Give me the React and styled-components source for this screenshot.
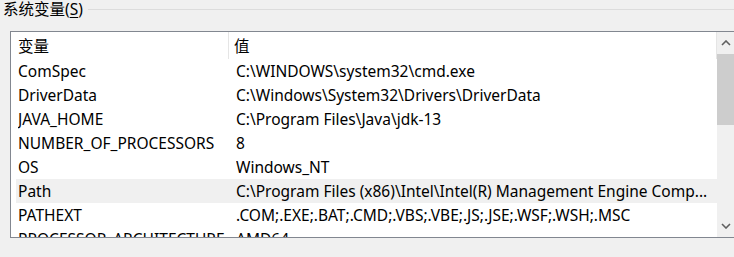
import styled, { createGlobalStyle } from 'styled-components';

const GlobalStyle = createGlobalStyle`
  html, body {
    margin: 0;
    padding: 0;
    background: #f0f0f0;
    overflow: hidden;
  }
  body {
    font-family: 'Noto Sans', 'Noto Sans CJK SC', sans-serif;
    font-size: 15.5px;
    color: #000;
  }
`;

const vars = [
  ['ComSpec', 'C:\\WINDOWS\\system32\\cmd.exe'],
  ['DriverData', 'C:\\Windows\\System32\\Drivers\\DriverData'],
  ['JAVA_HOME', 'C:\\Program Files\\Java\\jdk-13'],
  ['NUMBER_OF_PROCESSORS', '8'],
  ['OS', 'Windows_NT'],
  ['Path', 'C:\\Program Files (x86)\\Intel\\Intel(R) Management Engine Comp...'],
  ['PATHEXT', '.COM;.EXE;.BAT;.CMD;.VBS;.VBE;.JS;.JSE;.WSF;.WSH;.MSC'],
  ['PROCESSOR_ARCHITECTURE', 'AMD64'],
];

const Chevron = ({ down }) => (
  <svg width="10" height="6" viewBox="0 0 10 6">
    <path
      d={down ? 'M1 1 L5 5 L9 1' : 'M1 5 L5 1 L9 5'}
      fill="none"
      stroke="#606060"
      strokeWidth="1.6"
    />
  </svg>
);

const App = () => {
  return (
    <>
      <GlobalStyle />
      <Page>
        <GroupHead>
          <GroupLabel>
            系统变量(<u>S</u>)
          </GroupLabel>
          <GroupLine />
        </GroupHead>
        <ListBox>
          <ListArea>
            <Header>
              <HeadCell>变量</HeadCell>
              <HeadCell $value>值</HeadCell>
            </Header>
            {vars.map(([name, value]) => (
              <Row key={name} $selected={name === 'Path'}>
                <Cell>{name}</Cell>
                <Cell>{value}</Cell>
              </Row>
            ))}
          </ListArea>
          <ScrollBar>
            <ArrowButton>
              <Chevron />
            </ArrowButton>
            <Track>
              <Thumb />
            </Track>
            <ArrowButton>
              <Chevron down />
            </ArrowButton>
          </ScrollBar>
        </ListBox>
      </Page>
    </>
  );
};

export default App;

const Page = styled.div`
  width: 734px;
  height: 257px;
  overflow: hidden;
`;

const GroupHead = styled.div`
  display: flex;
  align-items: center;
  height: 18px;
  padding-left: 3px;
`;

const GroupLabel = styled.span`
  line-height: 18px;
  white-space: nowrap;

  u {
    text-decoration-thickness: 1px;
    text-underline-offset: 2px;
  }
`;

const GroupLine = styled.div`
  flex: 1;
  height: 1px;
  background: #dcdcdc;
  margin-left: 5px;
`;

const ListBox = styled.div`
  margin: 13px 0 0 10px;
  width: 730px;
  height: 205px;
  border: 1px solid #828790;
  background: #fff;
  display: flex;
  overflow: hidden;
`;

const ListArea = styled.div`
  width: 706px;
  overflow: hidden;
`;

const Header = styled.div`
  display: grid;
  grid-template-columns: 217px 1fr;
  height: 27px;
  width: 705px;
  border-right: 1px solid #e5e5e5;
`;

const HeadCell = styled.div`
  display: flex;
  align-items: center;
  padding-left: ${(p) => (p.$value ? '5px' : '7px')};
  border-left: ${(p) => (p.$value ? '1px solid #e5e5e5' : 'none')};
`;

const Row = styled.div`
  display: grid;
  grid-template-columns: 218px 1fr;
  height: 24px;
  margin-left: 5px;
  padding-left: 2px;
  background: ${(p) => (p.$selected ? '#f0f0f0' : 'transparent')};
  align-items: center;
`;

const Cell = styled.div`
  white-space: nowrap;
  overflow: hidden;
  line-height: 24px;
`;

const ScrollBar = styled.div`
  width: 17px;
  background: #f0f0f0;
  display: flex;
  flex-direction: column;
`;

const ArrowButton = styled.div`
  height: 22px;
  display: flex;
  align-items: center;
  justify-content: center;
`;

const Track = styled.div`
  flex: 1;
`;

const Thumb = styled.div`
  height: 71px;
  background: #cdcdcd;
`;
